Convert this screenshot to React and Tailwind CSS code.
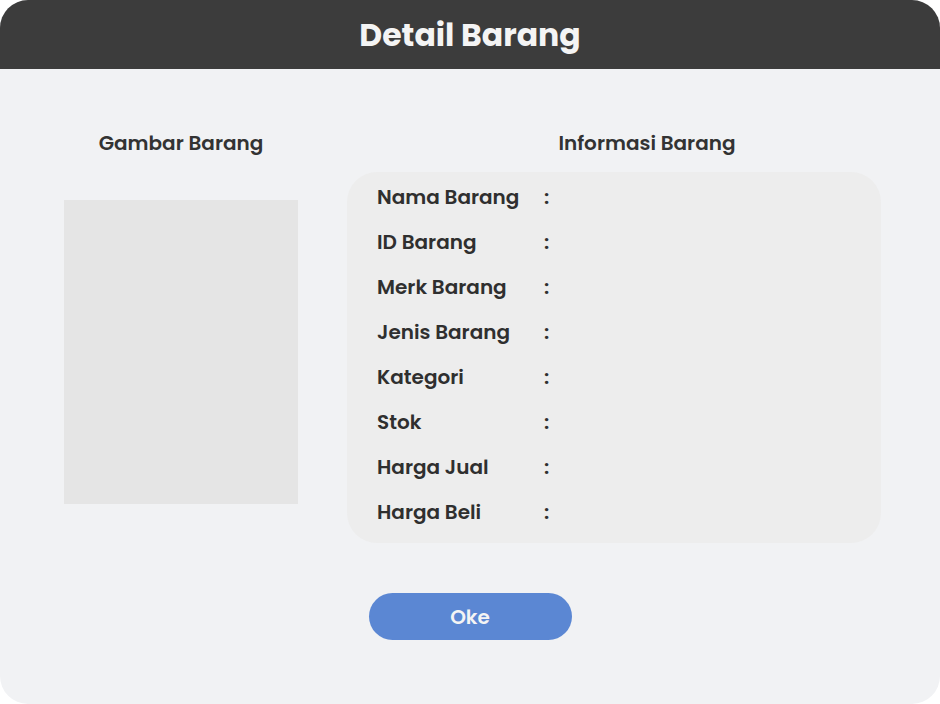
const ROWS = [
  'Nama Barang',
  'ID Barang',
  'Merk Barang',
  'Jenis Barang',
  'Kategori',
  'Stok',
  'Harga Jual',
  'Harga Beli',
]

export default function App() {
  return (
    <div className="w-[940px] h-[704px] bg-white" style={{ fontFamily: "Poppins, Inter, 'Noto Sans', sans-serif" }}>
      <div className="w-full h-full rounded-[28px] overflow-hidden bg-[#f1f2f4] flex flex-col">
        {/* Header */}
        <div className="h-[69px] bg-[#3c3c3c] flex items-center justify-center pt-[3px]">
          <h1 className="text-[31.5px] font-bold text-[#f4f4f4]">Detail Barang</h1>
        </div>

        {/* Body */}
        <div className="flex flex-col pt-[60px]">
          <div className="flex items-start">
            <div className="ml-[64px] w-[234px] flex flex-col">
              <h2 className="h-[28px] leading-[28px] text-center text-[20px] font-semibold text-[#333]">Gambar Barang</h2>
              <div className="mt-[43px] h-[304px] bg-[#e5e5e5]" />
            </div>
            <div className="ml-[49px] w-[534px] flex flex-col">
              <h2 className="h-[28px] leading-[28px] pl-[66px] text-center text-[20px] font-semibold text-[#333]">Informasi Barang</h2>
              <div className="mt-[15px] rounded-[30px] bg-[#ededed] pl-[30px] pt-[2px] pb-[9px]">
                {ROWS.map((r) => (
                  <div key={r} className="h-[45px] flex items-center text-[20px] font-semibold text-[#2f2f2f]">
                    <span className="w-[167px]">{r}</span>
                    <span>:</span>
                  </div>
                ))}
              </div>
            </div>
          </div>
          <div className="flex justify-center mt-[50px]">
            <button className="w-[203px] h-[47px] pt-[1px] rounded-full bg-[#5b87d3] text-[20px] font-semibold text-[#f4f4f4]">Oke</button>
          </div>
        </div>
      </div>
    </div>
  )
}
